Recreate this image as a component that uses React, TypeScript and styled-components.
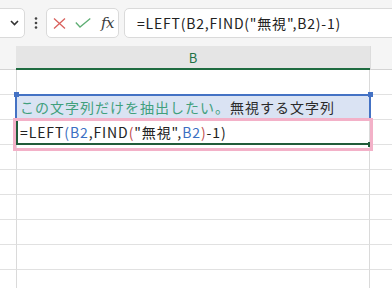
import React from 'react'
import styled, { createGlobalStyle } from 'styled-components'

const GlobalStyle = createGlobalStyle`
  html, body {
    margin: 0;
    padding: 0;
    background: #ffffff;
    overflow: hidden;
  }
  body {
    font-family: "Noto Sans CJK JP", "Noto Sans", sans-serif;
  }
`

const Page = styled.div`
  width: 392px;
  height: 288px;
  overflow: hidden;
  background: #fff;
`

// formula bar strip
const Toolbar = styled.div`
  display: flex;
  align-items: flex-start;
  height: 46px;
  padding-top: 8px;
  box-sizing: border-box;
  background: #f5f5f5;
`

const NameBox = styled.div`
  width: 33px;
  height: 30px;
  margin-left: -8px;
  box-sizing: border-box;
  border: 1px solid #dadada;
  border-radius: 5px;
  background: #fff;
  display: flex;
  align-items: center;
  justify-content: flex-end;
  padding-right: 5px;
`

const Dots = styled.div`
  width: 21px;
  height: 30px;
  display: flex;
  align-items: center;
  justify-content: center;
`

const FxButtons = styled.div`
  width: 73px;
  height: 30px;
  box-sizing: border-box;
  border: 1px solid #dadada;
  border-radius: 5px;
  background: #fff;
  display: flex;
  align-items: center;
  padding-left: 6px;
  gap: 9px;
`

const FxLabel = styled.span`
  font-family: "DejaVu Serif", "Liberation Serif", serif;
  font-style: italic;
  font-size: 15px;
  color: #3c3c3c;
  margin-left: 1px;
  letter-spacing: -0.5px;
`

const FormulaBar = styled.div`
  flex: 1;
  height: 30px;
  margin-left: 5px;
  margin-right: -10px;
  box-sizing: border-box;
  border: 1px solid #dadada;
  border-radius: 5px;
  background: #fff;
  display: flex;
  align-items: center;
  padding-left: 12px;
  font-size: 14px;
  color: #222;
  letter-spacing: 0.8px;
`

const Sheet = styled.div`
  display: flex;
  flex-direction: column;
`

const HeaderRow = styled.div`
  display: flex;
  height: 24px;
`

const Corner = styled.div`
  width: 16px;
  background: #f5f5f5;
  border-bottom: 1px solid #d4d4d4;
  box-sizing: border-box;
`

const ColHeader = styled.div<{ $active?: boolean }>`
  box-sizing: border-box;
  width: ${p => (p.$active ? '354px' : 'auto')};
  flex: ${p => (p.$active ? 'none' : '1')};
  background: ${p => (p.$active ? '#e5e5e5' : '#f5f5f5')};
  border-bottom: ${p => (p.$active ? '2px solid #1f6b40' : '1px solid #d4d4d4')};
  border-left: ${p => (p.$active ? 'none' : '1px solid #dcdcdc')};
  color: #1f7245;
  font-size: 13px;
  display: flex;
  align-items: center;
  justify-content: center;
  padding-top: 1px;
`

const Row = styled.div`
  display: flex;
  height: 25px;
`

const RowHead = styled.div`
  width: 17px;
  box-sizing: border-box;
  border-right: 1px solid #dadada;
  border-bottom: 1px solid #e1e1e1;
`

const Cell = styled.div<{ $sel?: boolean; $edit?: boolean }>`
  position: relative;
  width: 353px;
  box-sizing: border-box;
  border-right: 1px solid #dadada;
  border-bottom: 1px solid #e1e1e1;
  background: ${p => (p.$sel ? '#dae3f3' : '#fff')};
  font-size: 14px;
  letter-spacing: ${p => (p.$sel ? '1px' : '0.9px')};
  line-height: 24px;
  padding-left: 3px;
  white-space: nowrap;
  color: #2b2b2b;

  &::after {
    content: '';
    position: absolute;
    pointer-events: none;
    ${p =>
      p.$sel
        ? `left: -2px; top: -1px; right: -2px; bottom: -1px; border: 2px solid #4472c4;`
        : ''}
    ${p =>
      p.$edit
        ? `left: -1px; top: 0; right: 0; bottom: -1px; border-left: 2px solid #215c3a; border-bottom: 2px solid #215c3a;`
        : ''}
  }
`

const OtherCell = styled.div`
  flex: 1;
  border-bottom: 1px solid #e1e1e1;
`

const Handle = styled.div<{ $side: 'left' | 'right'; $color: string; $bottom?: boolean }>`
  position: absolute;
  z-index: 2;
  width: 5px;
  height: 5px;
  background: ${p => p.$color};
  ${p => (p.$side === 'left' ? 'left: -3px;' : 'right: -4px;')}
  ${p => (p.$bottom ? 'bottom: -3px;' : 'top: -3px;')}
`

const Callout = styled.div`
  position: absolute;
  z-index: 3;
  left: -4px;
  right: -4px;
  top: -2px;
  bottom: -7px;
  border: 3px solid #f3b1c8;
  pointer-events: none;
`

const Tok = styled.span<{ $c?: string }>`
  color: ${p => p.$c || '#222'};
`

const REF = '#3b6fc2'
const PAREN = '#c2504f'

const Formula = () => (
  <>
    <Tok>=LEFT</Tok>
    <Tok $c={REF}>(</Tok>
    <Tok $c={REF}>B2</Tok>
    <Tok>,FIND</Tok>
    <Tok $c={PAREN}>(</Tok>
    <Tok>"無視",</Tok>
    <Tok $c={REF}>B2</Tok>
    <Tok $c={PAREN}>)</Tok>
    <Tok>-1)</Tok>
  </>
)

const Chevron = () => (
  <svg width="9" height="6" viewBox="0 0 9 6">
    <path d="M1 1 L4.5 4.5 L8 1" fill="none" stroke="#333" strokeWidth="1.6" />
  </svg>
)

const VDots = () => (
  <svg width="4" height="12" viewBox="0 0 4 12">
    <circle cx="2" cy="1.5" r="1.3" fill="#444" />
    <circle cx="2" cy="6" r="1.3" fill="#444" />
    <circle cx="2" cy="10.5" r="1.3" fill="#444" />
  </svg>
)

const Cross = () => (
  <svg width="13" height="11" viewBox="0 0 13 11">
    <path d="M1 0.5 L12 10.5 M12 0.5 L1 10.5" stroke="#d9605c" strokeWidth="1.3" fill="none" />
  </svg>
)

const Check = () => (
  <svg width="16" height="10" viewBox="0 0 16 10">
    <path d="M0.8 4.5 L5 9 L15.3 0.5" stroke="#5fae74" strokeWidth="1.3" fill="none" />
  </svg>
)

const emptyRows = [4, 5, 6, 7, 8, 9]

const App = () => {
  return (
    <Page>
      <GlobalStyle />
      <Toolbar>
        <NameBox>
          <Chevron />
        </NameBox>
        <Dots>
          <VDots />
        </Dots>
        <FxButtons>
          <Cross />
          <Check />
          <FxLabel>fx</FxLabel>
        </FxButtons>
        <FormulaBar>
          =LEFT(B2,FIND("無視",B2)-1)
        </FormulaBar>
      </Toolbar>
      <Sheet>
        <HeaderRow>
          <Corner />
          <ColHeader $active>B</ColHeader>
          <ColHeader />
        </HeaderRow>
        <Row>
          <RowHead />
          <Cell />
          <OtherCell />
        </Row>
        <Row>
          <RowHead />
          <Cell $sel>
            <Handle $side="left" $color="#4472c4" />
            <Handle $side="right" $color="#4472c4" />
            <Tok $c="#41a07d">この文字列だけを抽出したい。</Tok>
            <Tok $c="#2b2b2b">無視する文字列</Tok>
          </Cell>
          <OtherCell />
        </Row>
        <Row>
          <RowHead />
          <Cell $edit>
            <Handle $side="right" $color="#215c3a" $bottom />
            <Callout />
            <Formula />
          </Cell>
          <OtherCell />
        </Row>
        {emptyRows.map(n => (
          <Row key={n}>
            <RowHead />
            <Cell />
            <OtherCell />
          </Row>
        ))}
      </Sheet>
    </Page>
  )
}

export default App
